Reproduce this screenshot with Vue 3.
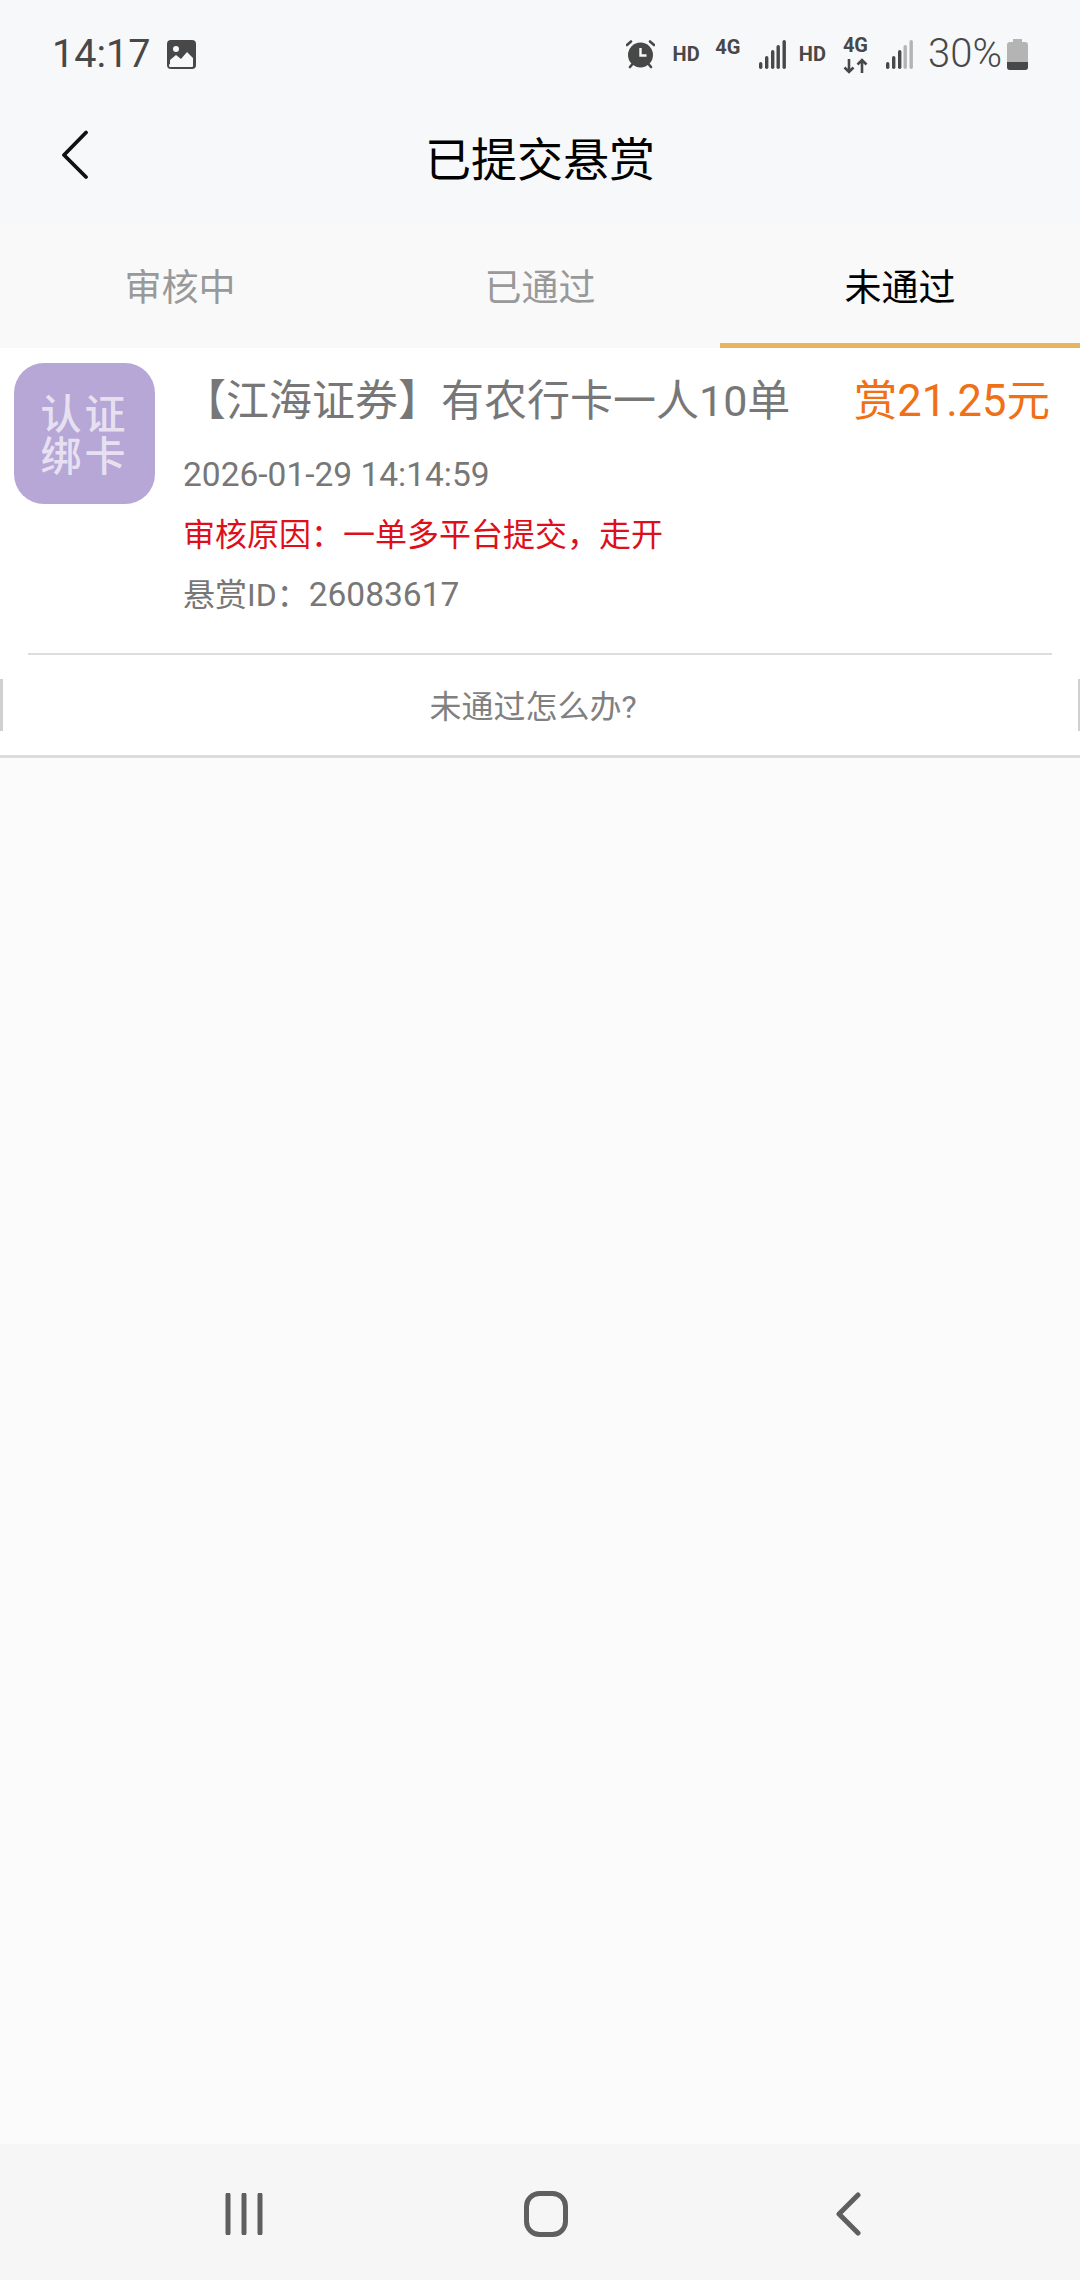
<script setup>
const tabs = [
  { label: '审核中', active: false },
  { label: '已通过', active: false },
  { label: '未通过', active: true },
]
</script>

<template>
  <div class="page">
    <header class="top">
      <div class="status">
        <span class="time">14:17</span>
        <svg class="pic" width="29" height="29" viewBox="0 0 29 29">
          <rect width="29" height="29" rx="4" fill="#484848" />
          <circle cx="9" cy="9" r="3" fill="#f7f8fa" />
          <path d="M3 24v-4l6-5 5 4 6-7 6 6v8a1 1 0 0 1-1 1H4a1 1 0 0 1-1-3z" fill="#f7f8fa" />
        </svg>
        <span class="spacer"></span>
        <svg class="alarm" width="29" height="29" viewBox="0 0 29 29">
          <circle cx="14.5" cy="15" r="12.5" fill="#484848" />
          <path d="M14.5 8v7.5h6" fill="none" stroke="#f7f8fa" stroke-width="2.4" />
          <path d="M1 5l4-3.5M28 5l-4-3.5M4 27l2.5-3M25 27l-2.5-3" stroke="#484848" stroke-width="2.6" stroke-linecap="round" />
        </svg>
        <span class="net hd first-hd">HD</span>
        <span class="net g4">4G</span>
        <svg class="sig sig-a" width="27" height="29" viewBox="0 0 27 29">
          <rect x="0" y="22" width="3.4" height="7" rx="1.7" fill="#484848" />
          <rect x="6" y="16" width="3.4" height="13" rx="1.7" fill="#484848" />
          <rect x="12" y="10" width="3.4" height="19" rx="1.7" fill="#484848" />
          <rect x="17.5" y="5" width="3.4" height="24" rx="1.7" fill="#484848" />
          <rect x="23.5" y="0" width="3.4" height="29" rx="1.7" fill="#484848" />
        </svg>
        <span class="net hd second-hd">HD</span>
        <span class="stack">
          <span class="net">4G</span>
          <svg width="25" height="16" viewBox="0 0 25 16">
            <path d="M6 1v13M1.5 9.5L6 14l4.500-4.500M19 15V2M14.500 6.500L19 2l4.500 4.500" fill="none" stroke="#484848" stroke-width="2.600" />
          </svg>
        </span>
        <svg class="sig sig-b" width="27" height="29" viewBox="0 0 27 29">
          <rect x="0" y="22" width="3.400" height="7" rx="1.700" fill="#484848" />
          <rect x="6" y="16" width="3.400" height="13" rx="1.700" fill="#484848" />
          <rect x="12" y="10" width="3.400" height="19" rx="1.700" fill="#484848" />
          <rect x="17.500" y="5" width="3.400" height="24" rx="1.700" fill="#b4b4b4" />
          <rect x="23.500" y="0" width="3.400" height="29" rx="1.700" fill="#b4b4b4" />
        </svg>
        <span class="pct">30%</span>
        <svg class="batt" width="21" height="31" viewBox="0 0 21 31">
          <path d="M6 0h9v3h3a3 3 0 0 1 3 3v22a3 3 0 0 1-3 3H3a3 3 0 0 1-3-3V6a3 3 0 0 1 3-3h3z" fill="#b4b4b4" />
          <path d="M0 23h21v5a3 3 0 0 1-3 3H3a3 3 0 0 1-3-3z" fill="#484848" />
        </svg>
      </div>
      <div class="nav">
        <svg class="back" width="30" height="50" viewBox="0 0 30 50">
          <path d="M26 2.500L4 25 26 47" fill="none" stroke="#111" stroke-width="3.800" stroke-linecap="round" stroke-linejoin="round" />
        </svg>
        <h1 class="title">已提交悬赏</h1>
      </div>
    </header>

    <nav class="tabs">
      <div v-for="t in tabs" :key="t.label" class="tab" :class="{ active: t.active }">{{ t.label }}</div>
    </nav>

    <section class="card">
      <div class="main">
        <div class="logo"><span class="logo-text">认证绑卡</span></div>
        <div class="info">
          <div class="head">
            <span class="name">【江海证券】有农行卡一人10单</span>
            <span class="price">赏21.25元</span>
          </div>
          <div class="line date">2026-01-29 14:14:59</div>
          <div class="line reason">审核原因：一单多平台提交，走开</div>
          <div class="line rid"><span class="rid-label">悬赏ID：</span>26083617</div>
        </div>
      </div>
      <div class="divider"></div>
      <div class="help"><span>未通过怎么办?</span></div>
    </section>

    <main class="empty"></main>

    <footer class="sysbar">
      <svg width="38" height="42" viewBox="0 0 38 42" class="menu">
        <path d="M3 2v38M19 2v38M35 2v38" stroke="#5f5f5f" stroke-width="5" stroke-linecap="round" />
      </svg>
      <svg width="44" height="46" viewBox="0 0 44 46" class="home">
        <rect x="2.500" y="2.500" width="39" height="41" rx="13" fill="none" stroke="#5f5f5f" stroke-width="5" />
      </svg>
      <svg width="28" height="44" viewBox="0 0 28 44" class="prev">
        <path d="M24 3L5 22l19 19" fill="none" stroke="#5f5f5f" stroke-width="5" stroke-linecap="round" stroke-linejoin="round" />
      </svg>
    </footer>
  </div>
</template>

<style scoped>
.page {
  width: 1080px;
  height: 2280px;
  display: flex;
  flex-direction: column;
  background: #fbfbfb;
  font-family: "Noto Sans CJK SC", Roboto, sans-serif;
  overflow: hidden;
}
.top { background: #f7f8fa; }
.status {
  height: 108px;
  display: flex;
  align-items: center;
  padding: 0 52px 0 52px;
  color: #484848;
  font-family: Roboto, sans-serif;
}
.time { font-size: 39.500px; line-height: 1; width: 115px; }
.pic { display: block; }
.spacer { flex: 1; }
.net { font-size: 20px; font-weight: 700; line-height: 1; letter-spacing: 0; }
.alarm { margin-right: -2px; }
.first-hd { margin-left: 20px; }
.g4 { margin-left: 15.500px; margin-top: -15px; }
.sig-a { margin-left: 18.500px; }
.second-hd { margin-left: 13px; }
.stack { margin-left: 17px; display: flex; flex-direction: column; align-items: center; gap: 3px; }
.sig-b { margin-left: 18px; }
.pct { font-size: 40px; font-weight: 300; line-height: 1; margin-left: 15px; width: 79px; }
.batt { display: block; }
.nav {
  height: 117px;
  display: flex;
  align-items: center;
  justify-content: center;
  position: relative;
  padding-bottom: 21px;
  box-sizing: border-box;
}
.back { position: absolute; left: 60px; top: 22px; }
.title { margin: 0; font-size: 46px; font-weight: 400; color: #000; line-height: 1; }
.tabs { height: 123px; background: #f9f9f9; display: flex; }
.tab {
  flex: 1;
  display: flex;
  align-items: center;
  justify-content: center;
  font-size: 37px;
  color: #999;
  border-bottom: 5px solid transparent;
  padding-top: 2px;
}
.tab.active { color: #000; border-bottom-color: #e8b55f; }
.card { background: #fff; border-bottom: 3px solid #dcdcdc; }
.main { display: flex; padding: 15px 30px 0 14px; height: 305px; box-sizing: border-box; }
.logo {
  width: 141px;
  height: 141px;
  border-radius: 30px;
  background: #b7a7d7;
  display: flex;
  align-items: center;
  justify-content: center;
  flex-shrink: 0;
}
.logo-text {
  display: block;
  width: 90px;
  margin-top: -4px;
  color: rgba(255, 255, 255, 0.68);
  font-size: 41px;
  font-weight: 500;
  line-height: 42px;
  letter-spacing: 3px;
  text-align: center;
}
.info { flex: 1; margin-left: 28px; }
.head { display: flex; justify-content: space-between; align-items: center; height: 68px; margin-bottom: 14px; }
.name { font-size: 43px; color: #777; font-family: Roboto, "Noto Sans CJK SC", sans-serif; white-space: nowrap; }
.price { font-size: 43.500px; color: #f07016; font-family: Roboto, "Noto Sans CJK SC", sans-serif; white-space: nowrap; }
.line { height: 60px; line-height: 60px; font-size: 33.500px; color: #777; font-family: Roboto, "Noto Sans CJK SC", sans-serif; white-space: nowrap; }
.reason { font-size: 32px; color: #dd0f1a; }
.rid-label { font-size: 32px; }
.divider { height: 2px; background: #ddd; margin: 0 28px; }
.help {
  height: 100px;
  box-sizing: border-box;
  padding-bottom: 2px;
  display: flex;
  align-items: center;
  justify-content: center;
  color: #808080;
  font-size: 32px;
  position: relative;
  font-family: Roboto, "Noto Sans CJK SC", sans-serif;
}
.help span { margin-right: 14px; }
.help::before, .help::after {
  content: "";
  position: absolute;
  top: 24px;
  height: 52px;
  width: 3px;
  background: #d0d0d0;
}
.help::before { left: 0; }
.help::after { right: 0; width: 2px; }
.empty { flex: 1; }
.sysbar {
  height: 136px;
  box-sizing: border-box;
  padding-top: 3px;
  background: #f6f6f6;
  display: flex;
  align-items: center;
  position: relative;
}
.menu { margin-left: 225px; }
.home { margin-left: 261px; }
.prev { margin-left: 266px; }
</style>
